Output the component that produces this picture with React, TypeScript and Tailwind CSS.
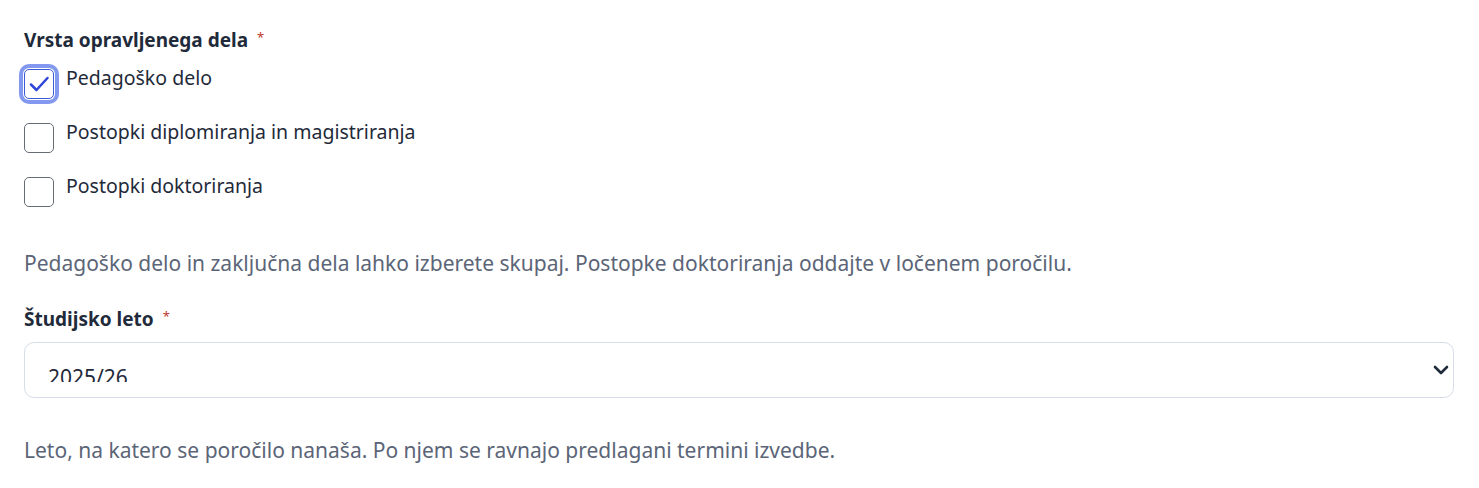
import React from "react";

const font = { fontFamily: '"Noto Sans", "Open Sans", sans-serif' };

function Check({ checked }: { checked?: boolean }) {
  if (checked) {
    return (
      <div className="w-[30px] h-[30px] shrink-0 rounded-[5px] border-[1.5px] border-[#3b5bdb] bg-white shadow-[0_0_0_1px_#ffffff,0_0_0_5px_#8399f0] flex items-center justify-center">
        <svg width="27" height="27" viewBox="0 0 27 27" fill="none">
          <path d="M5 13.5 L10.5 19 L21.5 7" stroke="#2f45d8" strokeWidth="2.5" strokeLinecap="round" strokeLinejoin="round" />
        </svg>
      </div>
    );
  }
  return <div className="w-[30px] h-[30px] shrink-0 rounded-[5px] border-[1.5px] border-[#666c76] bg-white" />;
}

function Row({ label, checked }: { label: string; checked?: boolean }) {
  return (
    <div className="flex items-start gap-[12px] h-[54px]">
      <Check checked={checked} />
      <span className="text-[19.5px] leading-[28px] text-[#1f2a3a] -mt-[5px]">{label}</span>
    </div>
  );
}

export default function App() {
  return (
    <div className="bg-white w-[1479px] h-[488px] pl-[24px] pr-[25px] pt-[26px]" style={font}>
      <div className="flex items-center text-[19px] leading-[28px] font-bold text-[#1f2a3a]">
        Vrsta opravljenega dela
        <span className="text-[#c0392b] text-[13px] font-normal ml-[9px] -mt-[6px]">*</span>
      </div>
      <div className="mt-[15px]">
        <Row label="Pedagoško delo" checked />
        <Row label="Postopki diplomiranja in magistriranja" />
        <Row label="Postopki doktoriranja" />
      </div>
      <p className="mt-[18px] text-[21px] leading-[28px] text-[#5b6577]">
        Pedagoško delo in zaključna dela lahko izberete skupaj. Postopke doktoriranja oddajte v ločenem poročilu.
      </p>
      <div className="mt-[28px] flex items-center text-[19px] leading-[28px] font-bold text-[#1f2a3a]">
        Študijsko leto
        <span className="text-[#c0392b] text-[13px] font-normal ml-[9px] -mt-[6px]">*</span>
      </div>
      <div className="mt-[9px] h-[56px] w-full rounded-[10px] border border-[#d6dde8] bg-white flex items-start justify-between pl-[23px] pr-[4px]">
        <div className="h-[39px] overflow-hidden pt-[20px]">
          <span className="block text-[21px] leading-[28px] text-[#1f2a3a]">2025/26</span>
        </div>
        <svg className="mt-[19px]" width="16" height="16" viewBox="0 0 16 16" fill="none">
          <path d="M2 5 L8 11 L14 5" stroke="#1f2a3a" strokeWidth="2.6" strokeLinecap="round" strokeLinejoin="round" />
        </svg>
      </div>
      <p className="mt-[38px] text-[21px] leading-[28px] text-[#5b6577]">
        Leto, na katero se poročilo nanaša. Po njem se ravnajo predlagani termini izvedbe.
      </p>
    </div>
  );
}
